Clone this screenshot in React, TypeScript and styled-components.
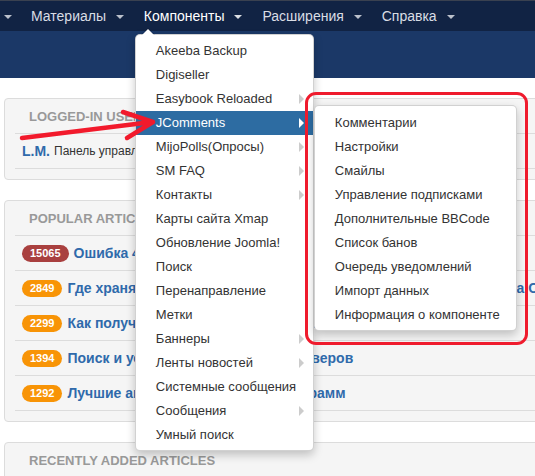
import React from "react";
import styled, { createGlobalStyle, css } from "styled-components";

const GlobalStyle = createGlobalStyle`
  html, body { margin: 0; padding: 0; background: #fff; overflow: hidden; }
  body { font-family: "Liberation Sans", Arial, Helvetica, sans-serif; }
  * { box-sizing: border-box; }
`;

const Page = styled.div`
  position: relative;
  width: 535px;
  height: 476px;
  overflow: hidden;
  background: #fff;
`;

const NavBar = styled.nav`
  height: 31px;
  background: #112344;
  border-top: 1px solid #3a4150;
  display: flex;
  align-items: stretch;
  position: relative;
  z-index: 20;
`;

const NavItem = styled.div<{ $active?: boolean; $first?: boolean }>`
  position: relative;
  padding: ${(p) => (p.$first ? "0 9px 0 0" : "0 10px")};
  line-height: 30px;
  font-size: 14px;
  color: ${(p) => (p.$active ? "#ffffff" : "#d9dde4")};
  white-space: nowrap;
`;

const Caret = styled.span<{ $first?: boolean }>`
  display: inline-block;
  width: 0;
  height: 0;
  margin-left: ${(p) => (p.$first ? "4px" : "6px")};
  vertical-align: middle;
  border-top: 4px solid currentColor;
  border-left: 4px solid transparent;
  border-right: 4px solid transparent;
  opacity: 0.85;
`;

const Dropdown = styled.div`
  position: absolute;
  top: 33px;
  left: 1px;
  width: 179px;
  background: #fff;
  border: 1px solid rgba(0, 0, 0, 0.18);
  border-radius: 5px;
  box-shadow: 0 4px 10px rgba(0, 0, 0, 0.22);
  padding: 4px 0 3px;
  z-index: 30;

  &::before {
    content: "";
    position: absolute;
    top: -7px;
    left: 5px;
    border-left: 7px solid transparent;
    border-right: 7px solid transparent;
    border-bottom: 7px solid rgba(0, 0, 0, 0.12);
  }
  &::after {
    content: "";
    position: absolute;
    top: -6px;
    left: 6px;
    border-left: 6px solid transparent;
    border-right: 6px solid transparent;
    border-bottom: 6px solid #fff;
  }
`;

const MenuItem = styled.div<{ $active?: boolean; $sub?: boolean }>`
  position: relative;
  height: 24px;
  line-height: 24px;
  padding: 0 20px;
  font-size: 13px;
  color: #333;
  white-space: nowrap;
  ${(p) =>
    p.$active &&
    css`
      background: #2d6ca2;
      color: #fff;
    `}
  ${(p) =>
    p.$sub &&
    css`
      &::after {
        content: "";
        position: absolute;
        right: 9px;
        top: 7px;
        border-top: 5px solid transparent;
        border-bottom: 5px solid transparent;
        border-left: 5px solid ${p.$active ? "#fff" : "#cccccc"};
      }
    `}
`;

const SubMenu = styled.div`
  position: absolute;
  top: -6px;
  left: calc(100% + 1px);
  width: 203px;
  background: #fff;
  border: 1px solid rgba(0, 0, 0, 0.18);
  border-radius: 5px;
  box-shadow: 0 4px 10px rgba(0, 0, 0, 0.22);
  padding: 5px 0 3px;
  z-index: 31;
`;

const SubItem = styled.div`
  height: 24px;
  line-height: 24px;
  padding: 0 20px;
  font-size: 13px;
  color: #333;
  white-space: nowrap;
`;

const HeaderBand = styled.div`
  height: 47px;
  background: #1b3867;
`;

const Content = styled.div`
  width: 900px;
  padding: 20px 0 0 4px;
`;

const Card = styled.section`
  background: #f5f5f5;
  border: 1px solid #dcdcdc;
  border-radius: 4px;
  padding: 0 10px 10px;
  margin-bottom: 20px;
`;

const CardTitle = styled.h2`
  margin: 0;
  height: 34px;
  line-height: 36px;
  padding-left: 14px;
  font-size: 13px;
  font-weight: bold;
  text-transform: uppercase;
  color: #999;
`;

const Row = styled.div`
  height: 35px;
  border-top: 1px solid #dcdcdc;
  display: flex;
  align-items: center;
  gap: 5px;
  padding-left: 7px;
  white-space: nowrap;
  &:last-child {
    border-bottom: 1px solid #dcdcdc;
    height: 36px;
  }
`;

const Badge = styled.span<{ $tone: "red" | "orange" }>`
  display: inline-block;
  height: 17px;
  line-height: 17px;
  padding: 0 8px;
  border-radius: 9px;
  font-size: 11px;
  font-weight: bold;
  color: #fff;
  background: ${(p) => (p.$tone === "red" ? "#a9403f" : "#f89406")};
`;

const ArticleLink = styled.a`
  font-size: 14px;
  font-weight: bold;
  color: #2f6aab;
  text-decoration: none;
`;

const UserName = styled.a`
  font-size: 14px;
  font-weight: bold;
  color: #2f6aab;
  text-decoration: none;
`;

const UserMeta = styled.span`
  font-size: 12px;
  color: #333;
  margin-left: -1px;
`;

const RedFrame = styled.div`
  position: absolute;
  left: 305px;
  top: 92px;
  width: 223px;
  height: 253px;
  border: 3px solid #ef1b2d;
  border-radius: 11px;
  z-index: 50;
  pointer-events: none;
`;

const ArrowLayer = styled.svg`
  position: absolute;
  left: 0;
  top: 100px;
  z-index: 50;
  pointer-events: none;
`;

const menu: { label: string; sub?: boolean; active?: boolean }[] = [
  { label: "Akeeba Backup" },
  { label: "Digiseller" },
  { label: "Easybook Reloaded", sub: true },
  { label: "JComments", sub: true, active: true },
  { label: "MijoPolls(Опросы)", sub: true },
  { label: "SM FAQ", sub: true },
  { label: "Контакты", sub: true },
  { label: "Карты сайта Xmap" },
  { label: "Обновление Joomla!" },
  { label: "Поиск" },
  { label: "Перенаправление" },
  { label: "Метки" },
  { label: "Баннеры", sub: true },
  { label: "Ленты новостей", sub: true },
  { label: "Системные сообщения" },
  { label: "Сообщения", sub: true },
  { label: "Умный поиск" },
];

const subMenu = [
  "Комментарии",
  "Настройки",
  "Смайлы",
  "Управление подписками",
  "Дополнительные BBCode",
  "Список банов",
  "Очередь уведомлений",
  "Импорт данных",
  "Информация о компоненте",
];

const articles: { hits: string; tone: "red" | "orange"; title: string }[] = [
  { hits: "15065", tone: "red", title: "Ошибка 404 на сайте Joomla" },
  { hits: "2849", tone: "orange", title: "Где хранятся настройки шаблона и модулей в базе данных сайта Сервера" },
  { hits: "2299", tone: "orange", title: "Как получить доступ к панели сайта" },
  { hits: "1394", tone: "orange", title: "Поиск и устранение неполадок серверов" },
  { hits: "1292", tone: "orange", title: "Лучшие агрегаторы новостей программ" },
];

export default function App() {
  return (
    <Page>
      <GlobalStyle />
      <NavBar>
        <NavItem $first>
          <Caret $first />
        </NavItem>
        <NavItem>
          Материалы <Caret />
        </NavItem>
        <NavItem $active>
          Компоненты <Caret />
          <Dropdown>
            {menu.map((m) => (
              <MenuItem key={m.label} $active={m.active} $sub={m.sub}>
                {m.label}
                {m.active && (
                  <SubMenu>
                    {subMenu.map((s) => (
                      <SubItem key={s}>{s}</SubItem>
                    ))}
                  </SubMenu>
                )}
              </MenuItem>
            ))}
          </Dropdown>
        </NavItem>
        <NavItem>
          Расширения <Caret />
        </NavItem>
        <NavItem>
          Справка <Caret />
        </NavItem>
      </NavBar>
      <HeaderBand />
      <Content>
        <Card>
          <CardTitle>Logged-in Users</CardTitle>
          <Row>
            <UserName href="#">L.M.</UserName>
            <UserMeta>Панель управления</UserMeta>
          </Row>
        </Card>
        <Card>
          <CardTitle>Popular Articles</CardTitle>
          {articles.map((a) => (
            <Row key={a.hits}>
              <Badge $tone={a.tone}>{a.hits}</Badge>
              <ArticleLink href="#">{a.title}</ArticleLink>
            </Row>
          ))}
        </Card>
        <Card>
          <CardTitle>Recently Added Articles</CardTitle>
          <Row />
        </Card>
      </Content>
      <RedFrame />
      <ArrowLayer width="200" height="60" viewBox="0 0 200 60">
        <path
          d="M22 38 L152 22 M123 12 L153 22 L127 38"
          fill="none"
          stroke="#f21a2c"
          strokeWidth="4.5"
          strokeLinecap="round"
          strokeLinejoin="round"
        />
      </ArrowLayer>
    </Page>
  );
}
